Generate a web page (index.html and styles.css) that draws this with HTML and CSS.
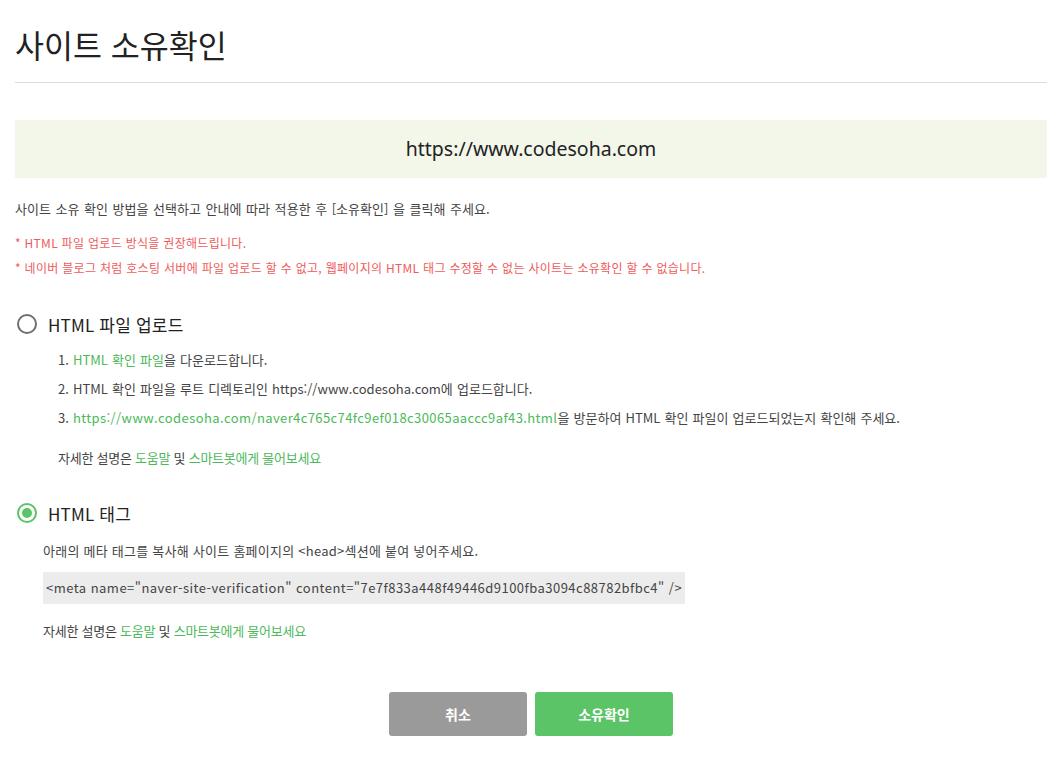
FILE: index.html
```html
<!DOCTYPE html>
<html lang="ko">
<head>
<meta charset="utf-8">
<title>사이트 소유확인</title>
<link rel="stylesheet" href="styles.css">
</head>
<body>
<div class="page">
  <h1 class="title">사이트 소유확인</h1>
  <div class="site-box">https://www.codesoha.com</div>
  <p class="desc">사이트 소유 확인 방법을 선택하고 안내에 따라 적용한 후 [소유확인] 을 클릭해 주세요.</p>
  <p class="warn warn-first">* HTML 파일 업로드 방식을 권장해드립니다.</p>
  <p class="warn">* 네이버 블로그 처럼 호스팅 서버에 파일 업로드 할 수 없고, 웹페이지의 HTML 태그 수정할 수 없는 사이트는 소유확인 할 수 없습니다.</p>

  <section class="method">
    <div class="method-head"><span class="radio"></span><span class="method-title">HTML 파일 업로드</span></div>
    <ol class="steps">
      <li>1. <a class="link">HTML 확인 파일</a>을 다운로드합니다.</li>
      <li>2. HTML 확인 파일을 루트 디렉토리인 https://www.codesoha.com에 업로드합니다.</li>
      <li>3. <a class="link url">https://www.codesoha.com/naver4c765c74fc9ef018c30065aaccc9af43.html</a>을 방문하여 HTML 확인 파일이 업로드되었는지 확인해 주세요.</li>
    </ol>
    <p class="help">자세한 설명은 <a class="link">도움말</a> 및 <a class="link">스마트봇에게 물어보세요</a></p>
  </section>

  <section class="method method-2">
    <div class="method-head"><span class="radio checked"></span><span class="method-title">HTML 태그</span></div>
    <p class="tag-desc">아래의 메타 태그를 복사해 사이트 홈페이지의 &lt;head&gt;섹션에 붙여 넣어주세요.</p>
    <div class="code">&lt;meta name="naver-site-verification" content="7e7f833a448f49446d9100fba3094c88782bfbc4" /&gt;</div>
    <p class="help help-2">자세한 설명은 <a class="link">도움말</a> 및 <a class="link">스마트봇에게 물어보세요</a></p>
  </section>

  <div class="buttons">
    <button class="btn btn-cancel">취소</button>
    <button class="btn btn-ok">소유확인</button>
  </div>
</div>
</body>
</html>
```

FILE: styles.css
```css
* { box-sizing: border-box; }
html, body { margin: 0; padding: 0; background: #fff; }
body {
  font-family: "Noto Sans CJK KR", "Noto Sans", sans-serif;
  color: #333;
}
.page {
  width: 1062px;
  padding: 0 15px;
}
.title {
  margin: 0;
  padding-top: 22px;
  height: 83px;
  font-size: 31.5px;
  line-height: 44px;
  font-weight: 400;
  color: #222;
  border-bottom: 1px solid #dedede;
  letter-spacing: 0;
}
.site-box {
  margin-top: 37px;
  height: 58px;
  background: #f2f7ea;
  text-align: center;
  font-family: "Noto Sans", sans-serif;
  font-size: 19.5px;
  line-height: 58px;
  color: #222;
}
.desc {
  margin: 21px 0 0;
  font-size: 13px;
  line-height: 20px;
  color: #444;
  letter-spacing: 0.05px;
  word-spacing: 0.8px;
}
.warn {
  margin: 0;
  font-size: 12px;
  line-height: 25px;
  color: #f05b5b;
  letter-spacing: 0.3px;
}
.warn-first { margin-top: 11px; }
.method { margin-top: 32px; }
.method-2 { margin-top: 33px; }
.method-head {
  display: flex;
  align-items: center;
  gap: 11px;
  height: 24px;
}
.radio {
  width: 20px;
  height: 20px;
  margin-left: 2px;
  border-radius: 50%;
  border: 2px solid #707070;
  display: inline-block;
  position: relative;
}
.radio.checked { border-color: #5ac467; }
.radio.checked::after {
  content: "";
  position: absolute;
  left: 3px; top: 3px;
  width: 10px; height: 10px;
  border-radius: 50%;
  background: #5ac467;
}
.method-title {
  font-size: 17px;
  color: #222;
  letter-spacing: 0.2px;
}
.steps {
  list-style: none;
  margin: 9px 0 0;
  padding: 0 0 0 43px;
  font-size: 13px;
  line-height: 29px;
  color: #444;
  letter-spacing: 0;
  word-spacing: 0.5px;
}
.url { letter-spacing: 0.4px; }
.link { color: #4cb95a; text-decoration: none; }
.help {
  margin: 16px 0 0 43px;
  font-size: 13px;
  line-height: 20px;
  color: #444;
  letter-spacing: -0.25px;
}
.tag-desc {
  margin: 16px 0 0 28px;
  font-size: 13px;
  line-height: 20px;
  color: #444;
  letter-spacing: 0.25px;
}
.code {
  margin: 11px 0 0 28px;
  display: inline-block;
  background: #ececec;
  height: 32px;
  line-height: 32px;
  padding: 0 3px 0 3px;
  font-size: 13px;
  color: #444;
  letter-spacing: 0.47px;
}
.method-2 .help-2 { margin: 17px 0 0 28px; }
.buttons {
  display: flex;
  justify-content: center;
  gap: 8px;
  margin-top: 51px;
}
.btn {
  width: 138px;
  height: 44px;
  border: none;
  border-radius: 3px;
  color: #fff;
  font-family: "Noto Sans CJK KR", sans-serif;
  font-size: 14px;
  font-weight: 700;
}
.btn-cancel { background: #9a9a9a; }
.btn-ok { background: #5ac467; }
```
